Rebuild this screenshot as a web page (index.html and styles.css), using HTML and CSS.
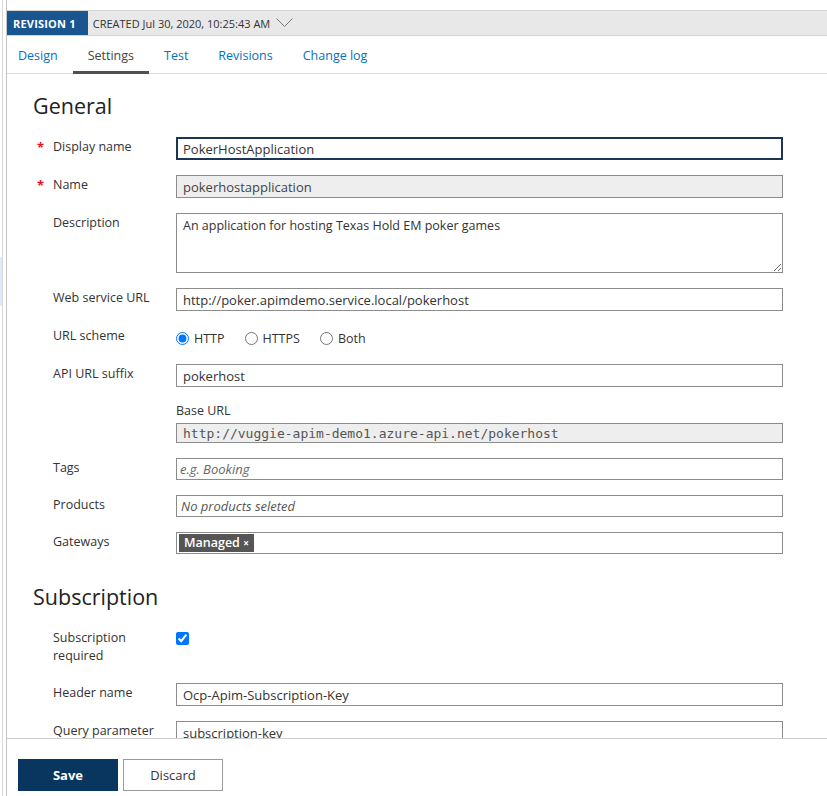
FILE: index.html
```html
<!DOCTYPE html>
<html lang="en">
<head>
  <meta charset="UTF-8" />
  <meta name="viewport" content="width=device-width, initial-scale=1.0"/>
  <title>API Settings</title>
  <link rel="stylesheet" href="styles.css">
</head>
<body>

<div class="shell">
  <div class="gutter"><div class="gutter-mark"></div></div>
  <div class="frame">
    <div class="panel">

      <div class="revbar">
        <span class="rev-badge">REVISION 1</span>
        <span class="rev-created">CREATED Jul 30, 2020, 10:25:43 AM</span>
        <svg class="chevron" width="17" height="10" viewBox="0 0 17 10">
          <polyline points="0.5,0.5 8.5,8.5 16.5,0.5" fill="none" stroke="#777" stroke-width="1"/>
        </svg>
      </div>

      <nav class="tabs">
        <a class="tab">Design</a>
        <a class="tab active">Settings</a>
        <a class="tab">Test</a>
        <a class="tab">Revisions</a>
        <a class="tab">Change log</a>
      </nav>

      <div class="content">
        <h2>General</h2>

        <div class="row">
          <span class="req">*</span>
          <label class="label">Display name</label>
          <div class="field"><input type="text" class="focused" value="PokerHostApplication"></div>
        </div>

        <div class="row">
          <span class="req">*</span>
          <label class="label">Name</label>
          <div class="field"><input type="text" class="readonly" value="pokerhostapplication" readonly></div>
        </div>

        <div class="row">
          <span></span>
          <label class="label">Description</label>
          <div class="field"><textarea>An application for hosting Texas Hold EM poker games</textarea></div>
        </div>

        <div class="row">
          <span></span>
          <label class="label">Web service URL</label>
          <div class="field"><input type="text" value="http://poker.apimdemo.service.local/pokerhost"></div>
        </div>

        <div class="row">
          <span></span>
          <label class="label">URL scheme</label>
          <div class="field radios">
            <label class="radio"><input type="radio" name="scheme" checked> HTTP</label>
            <label class="radio"><input type="radio" name="scheme"> HTTPS</label>
            <label class="radio"><input type="radio" name="scheme"> Both</label>
          </div>
        </div>

        <div class="row">
          <span></span>
          <label class="label">API URL suffix</label>
          <div class="field"><input type="text" value="pokerhost"></div>
        </div>

        <div class="row">
          <span></span>
          <span></span>
          <div class="field">
            <div class="sublabel">Base URL</div>
            <input type="text" class="readonly mono" value="http://vuggie-apim-demo1.azure-api.net/pokerhost" readonly>
          </div>
        </div>

        <div class="row">
          <span></span>
          <label class="label">Tags</label>
          <div class="field"><input type="text" class="short" placeholder="e.g. Booking"></div>
        </div>

        <div class="row">
          <span></span>
          <label class="label">Products</label>
          <div class="field"><div class="picker"><span class="hint">No products seleted</span></div></div>
        </div>

        <div class="row">
          <span></span>
          <label class="label">Gateways</label>
          <div class="field"><div class="picker"><span class="chip">Managed <span class="chip-x">×</span></span></div></div>
        </div>

        <h2 class="section">Subscription</h2>

        <div class="row tall">
          <span></span>
          <label class="label">Subscription required</label>
          <div class="field"><input type="checkbox" class="check" checked></div>
        </div>

        <div class="row">
          <span></span>
          <label class="label">Header name</label>
          <div class="field"><input type="text" value="Ocp-Apim-Subscription-Key"></div>
        </div>

        <div class="row">
          <span></span>
          <label class="label">Query parameter</label>
          <div class="field"><input type="text" value="subscription-key"></div>
        </div>
      </div>

      <div class="actions">
        <button class="btn primary">Save</button>
        <button class="btn">Discard</button>
      </div>

    </div>
  </div>
</div>

</body>
</html>
```

FILE: styles.css
```css
html, body {
  height: 100%;
}
body {
  margin: 0;
  font-family: 'Segoe UI', 'Open Sans', sans-serif;
  font-size: 12.5px;
  color: #333;
  background: #fff;
}
.shell {
  display: flex;
  height: 100vh;
}
.gutter {
  width: 2px;
  flex: none;
}
.gutter-mark {
  margin-top: 257px;
  height: 49px;
  background: #deecf9;
}
.frame {
  flex: 1;
  display: flex;
  border-left: 1px solid #d8d8d8;
  padding-left: 3px;
  min-width: 0;
}
.panel {
  flex: 1;
  display: flex;
  flex-direction: column;
  border-left: 1px solid #c4c4c4;
  padding-top: 10px;
  min-width: 0;
}

/* revision bar */
.revbar {
  display: flex;
  align-items: center;
  height: 24px;
  background: #e8e8e8;
  border-top: 1px solid #d4d4d4;
  border-bottom: 1px solid #d4d4d4;
}
.rev-badge {
  background: #195591;
  color: #fff;
  font-weight: 700;
  font-size: 11px;
  height: 100%;
  display: flex;
  align-items: center;
  padding: 0 12px 0 6px;
  letter-spacing: 0.2px;
}
.rev-created {
  margin-left: 5px;
  font-size: 11px;
  color: #333;
}
.chevron {
  margin-left: 6px;
}

/* tabs */
.tabs {
  display: flex;
  height: 37px;
  border-bottom: 1px solid #dcdcdc;
}
.tab {
  display: flex;
  align-items: center;
  padding: 3px 15px 0;
  color: #0072c6;
  border-bottom: 3px solid transparent;
  margin-bottom: -1px;
  cursor: pointer;
}
.tab:first-child {
  padding-left: 11px;
}
.tab.active {
  color: #444;
  border-bottom-color: #505050;
}

/* form */
.content {
  flex: 1;
  overflow: hidden;
  padding: 17px 0 0 26px;
}
.content h2 {
  font-size: 21.5px;
  font-weight: 400;
  color: #222;
  line-height: 30px;
  margin: 0 0 16px;
}
.content h2.section {
  margin-top: 28px;
}
.row {
  display: grid;
  grid-template-columns: 20px 123px 607px;
  margin-bottom: 15px;
}
.row.tall {
  margin-bottom: 18px;
}
.req {
  color: #e81123;
  font-weight: 700;
  padding-left: 4px;
  line-height: 20px;
  font-size: 13px;
}
.label {
  line-height: 18px;
  padding-top: 1px;
  padding-right: 16px;
  color: #333;
}
.field input[type=text],
.field textarea,
.picker {
  display: block;
  width: 100%;
  box-sizing: border-box;
  height: 23px;
  border: 1px solid #8c8c8c;
  padding: 0 6px;
  font: inherit;
  font-size: 13px;
  color: #333;
  background: #fff;
  outline: none;
}
.field input.focused {
  border: 2px solid #1b3557;
  padding: 0 5px;
}
.field input.readonly {
  background: #eee;
  color: #444;
}
.field input.mono {
  height: 20px;
  font-family: 'DejaVu Sans Mono', monospace;
  font-size: 13px;
  color: #555;
}
.field input.short {
  height: 22px;
  padding: 0 3px;
}
.field input::placeholder {
  font-style: italic;
  color: #666;
}
.field textarea {
  height: 60px;
  padding: 3px 6px;
  font-size: 12.5px;
  resize: vertical;
}
.sublabel {
  line-height: 18px;
  margin-bottom: 3px;
}
.radios {
  display: flex;
  align-items: center;
  gap: 20px;
  height: 21px;
  padding-top: 2px;
}
.radio {
  display: flex;
  align-items: center;
  gap: 5px;
}
.radio input {
  margin: 0;
  width: 13px;
  height: 13px;
}
.picker {
  height: 22px;
  display: flex;
  align-items: center;
  padding: 0 2px;
}
.hint {
  font-style: italic;
  color: #555;
  padding-left: 2px;
}
.chip {
  background: #555;
  color: #fff;
  font-weight: 600;
  font-size: 12.5px;
  padding: 0 5px;
  line-height: 18px;
}
.chip-x {
  font-size: 10px;
  font-weight: 700;
}
.check {
  margin: 4px 0 0;
  width: 13px;
  height: 13px;
}

/* footer */
.actions {
  border-top: 1px solid #cdcdcd;
  padding: 20px 0 5px 11px;
  display: flex;
  gap: 5px;
}
.btn {
  width: 100px;
  height: 32px;
  font: inherit;
  font-size: 13px;
  background: #fff;
  border: 1px solid #9a9a9a;
  color: #333;
  cursor: pointer;
}
.btn.primary {
  background: #08365f;
  border-color: #08365f;
  color: #fff;
  font-weight: 700;
}
```
